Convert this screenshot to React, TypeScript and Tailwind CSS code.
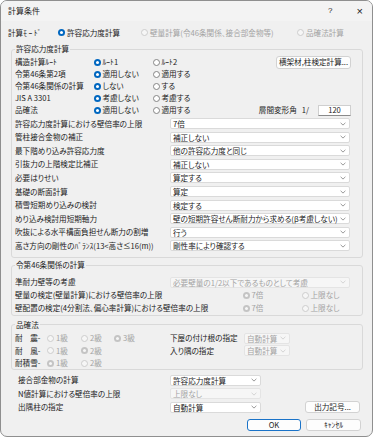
import React from 'react';

// Radio button dot in the Windows 11 style
function Radio({ checked = false, disabled = false }: { checked?: boolean; disabled?: boolean }) {
  if (checked && !disabled) {
    return (
      <span className="w-[7px] h-[7px] rounded-full bg-[#0067c0] flex items-center justify-center shrink-0">
        <span className="w-[3px] h-[3px] rounded-full bg-white" />
      </span>
    );
  }
  if (checked) {
    return (
      <span className="w-[7px] h-[7px] rounded-full bg-[#c4c4c4] flex items-center justify-center shrink-0">
        <span className="w-[3px] h-[3px] rounded-full bg-[#f6f6f6]" />
      </span>
    );
  }
  return (
    <span
      className={`w-[7px] h-[7px] rounded-full border shrink-0 ${
        disabled ? 'border-[#cdcdcd] bg-[#f6f6f6]' : 'border-[#858585] bg-white'
      }`}
    />
  );
}

// half-width katakana: keep their normal advance
const Hw = ({ children }: { children: React.ReactNode }) => (
  <span className="[font-feature-settings:normal]">{children}</span>
);

const RadioItem: React.FC<{
  label: React.ReactNode;
  checked?: boolean;
  disabled?: boolean;
  className?: string;
}> = ({ label, checked, disabled, className = '' }) => (
  <span className={`flex items-center gap-[1.5px] ${className}`}>
    <Radio checked={checked} disabled={disabled} />
    <span className={`leading-[10px] whitespace-nowrap ${disabled ? 'text-[#a3a3a3]' : ''}`}>{label}</span>
  </span>
);

const Chevron = ({ disabled }: { disabled?: boolean }) => (
  <svg width="6" height="4" viewBox="0 0 6 4" className="shrink-0">
    <path
      d="M0.6 0.8 L3 3.1 L5.4 0.8"
      fill="none"
      stroke={disabled ? '#cccccc' : '#808080'}
      strokeWidth="0.8"
    />
  </svg>
);

const Select: React.FC<{ value: string; disabled?: boolean; className?: string }> = ({
  value,
  disabled,
  className = 'w-[180px]',
}) => (
  <div
    className={`h-[11px] flex items-center pl-[2px] pr-[3px] rounded-[2px] border ${
      disabled ? 'bg-[#f6f6f6] border-[#e4e4e4] text-[#a3a3a3]' : 'bg-white border-[#dadada]'
    } ${className}`}
  >
    <span className="flex-1 whitespace-nowrap leading-[9px]">{value}</span>
    <Chevron disabled={disabled} />
  </div>
);

const Button: React.FC<{ label: React.ReactNode; className?: string; primary?: boolean }> = ({
  label,
  className = '',
  primary,
}) => (
  <div
    className={`h-[12px] flex items-center justify-center rounded-[3px] bg-[#fdfdfd] border leading-[10px] whitespace-nowrap ${
      primary ? 'border-[#1a73c8]' : 'border-[#d2d2d2]'
    } ${className}`}
  >
    {label}
  </div>
);

const DROPDOWN_ROWS: [React.ReactNode, string][] = [
  ['許容応力度計算における壁倍率の上限', '7倍'],
  ['管柱接合金物の補正', '補正しない'],
  ['最下階めり込み許容応力度', '他の許容応力度と同じ'],
  ['引抜力の上階検定比補正', '補正しない'],
  ['必要はりせい', '算定する'],
  ['基礎の断面計算', '算定'],
  ['積雪短期めり込みの検討', '検定する'],
  ['めり込み検討用短期軸力', '壁の短期許容せん断耐力から求める(β考慮しない)'],
  ['吹抜による水平構面負担せん断力の割増', '行う'],
  [
    <>
      高さ方向の剛性の<Hw>ﾊﾞﾗﾝｽ</Hw>(13&lt;高さ≤16(m))
    </>,
    '剛性率により確認する',
  ],
];

const RADIO_ROWS: [React.ReactNode, React.ReactNode, string][] = [
  [<Hw>構造計算ﾙｰﾄ</Hw>, <Hw>ﾙｰﾄ1</Hw>, 'ﾙｰﾄ2'],
  ['令第46条第2項', '適用しない', '適用する'],
  ['令第46条関係の計算', 'しない', 'する'],
  ['JIS A 3301', '考慮しない', '考慮する'],
  ['品確法', '適用しない', '適用する'],
];

export default function App() {
  return (
    <div className="w-[375px] h-[437px] bg-white font-['Noto_Sans_CJK_JP',sans-serif] [font-feature-settings:'palt'] text-[7.6px] leading-none text-[#1c1c1c]">
      <div className="w-[373px] h-[437px] border border-[#8f8f8f] rounded-[7px] bg-[#f0f0f0] overflow-hidden flex flex-col">
        {/* Title bar */}
        <div className="h-[20px] flex items-center pl-[7px] pr-[9px] bg-[#f3f3f3]">
          <span className="text-[8px] leading-[10px]">計算条件</span>
          <span className="ml-auto mr-[24px] text-[8px] font-['Liberation_Sans',sans-serif]">?</span>
          <span className="text-[11px] font-['Liberation_Sans',sans-serif] font-light">×</span>
        </div>

        <div className="flex flex-col pl-[10px]">
          {/* Mode */}
          <div className="h-[23px] flex items-center -ml-[3px]">
            <span className="w-[50px] leading-[10px]">
              計算<span className="[font-feature-settings:normal] tracking-[1.5px]">ﾓｰﾄﾞ</span>
            </span>
            <RadioItem label="許容応力度計算" checked className="w-[83px] gap-[2px]" />
            <RadioItem label="壁量計算(令46条関係、接合部金物等)" disabled className="w-[156px] gap-[2px]" />
            <RadioItem label="品確法計算" disabled className="gap-[2px]" />
          </div>

          {/* 許容応力度計算 */}
          <fieldset className="w-[352px] border border-[#d9d9d9] rounded-[3px]">
            <legend className="ml-[3px] px-[1px] leading-[10px]">許容応力度計算</legend>
            <div className="flex flex-col pl-[3px] pr-[11px] pt-[2px] pb-[5px]">
              {RADIO_ROWS.map(([label, a, b], i) => (
                <div key={i} className="h-[12px] flex items-center">
                  <span className="w-[79px] leading-[10px]">{label}</span>
                  <RadioItem label={a} checked className="w-[59px]" />
                  <RadioItem label={i === 0 ? <Hw>{b}</Hw> : b} />
                  {i === 0 && <Button label="横架材,柱検定計算..." className="ml-auto w-[75px] h-[13px]" />}
                  {i === 4 && (
                    <div className="ml-auto flex items-center leading-[10px]">
                      <span className="mr-[5px]">層間変形角</span>
                      <span className="mr-[9px]">1/</span>
                      <div className="w-[33px] h-[11px] bg-white border border-[#cfcfcf] border-b-[#8a8a8a] flex items-center justify-center">
                        120
                      </div>
                    </div>
                  )}
                </div>
              ))}
              <div className="mt-[1px] flex flex-col">
                {DROPDOWN_ROWS.map(([label, value], i) => (
                  <div key={i} className="h-[13.55px] flex items-center">
                    <span className="w-[155px] whitespace-nowrap leading-[10px]">{label}</span>
                    <Select value={value} />
                  </div>
                ))}
              </div>
            </div>
          </fieldset>

          {/* 令第46条関係の計算 */}
          <fieldset className="mt-[2px] w-[352px] border border-[#d9d9d9] rounded-[3px]">
            <legend className="ml-[3px] px-[1px] leading-[10px]">令第46条関係の計算</legend>
            <div className="flex flex-col pl-[3px] pr-[11px] pt-[5.5px] leading-[10px]">
              <div className="h-[13px] flex items-center">
                <span className="w-[155px]">準耐力壁等の考慮</span>
                <Select value="必要壁量の1/2以下であるものとして考慮" disabled />
              </div>
              <div className="h-[13px] flex items-center">
                <span className="w-[228px]">壁量の検定(壁量計算)における壁倍率の上限</span>
                <RadioItem label="7倍" checked disabled className="w-[59px]" />
                <RadioItem label="上限なし" disabled />
              </div>
              <div className="h-[13px] flex items-center">
                <span className="w-[228px]">壁配置の検定(4分割法、偏心率計算)における壁倍率の上限</span>
                <RadioItem label="7倍" checked disabled className="w-[59px]" />
                <RadioItem label="上限なし" disabled />
              </div>
            </div>
          </fieldset>

          {/* 品確法 */}
          <fieldset className="mt-[4px] w-[352px] border border-[#d9d9d9] rounded-[3px]">
            <legend className="ml-[3px] px-[1px] leading-[10px]">品確法</legend>
            <div className="flex flex-col pl-[3px] pt-[2px] leading-[10px]">
              <div className="h-[12.5px] flex items-center">
                <span className="w-[32px]">耐　震-</span>
                <RadioItem label="1級" disabled className="w-[34px] gap-[2px]" />
                <RadioItem label="2級" disabled className="w-[33px] gap-[2px]" />
                <RadioItem label="3級" checked disabled className="w-[56px] gap-[2px]" />
                <span className="w-[74px]">下屋の付け根の指定</span>
                <Select value="自動計算" disabled className="w-[46px]" />
              </div>
              <div className="h-[12.5px] flex items-center">
                <span className="w-[32px]">耐　風-</span>
                <RadioItem label="1級" disabled className="w-[34px] gap-[2px]" />
                <RadioItem label="2級" checked disabled className="w-[89px] gap-[2px]" />
                <span className="w-[74px]">入り隅の指定</span>
                <Select value="自動計算" disabled className="w-[46px]" />
              </div>
              <div className="h-[12.5px] flex items-center">
                <span className="w-[32px]">耐積雪-</span>
                <RadioItem label="1級" checked disabled className="w-[34px] gap-[2px]" />
                <RadioItem label="2級" disabled className="gap-[2px]" />
              </div>
            </div>
          </fieldset>

          {/* bottom rows */}
          <div className="mt-[3px] flex flex-col pl-[7px] leading-[10px]">
            <div className="h-[13.5px] flex items-center">
              <span className="w-[152px]">接合部金物の計算</span>
              <Select value="許容応力度計算" className="w-[91px]" />
            </div>
            <div className="h-[13.5px] flex items-center">
              <span className="w-[152px]">N値計算における壁倍率の上限</span>
              <Select value="上限なし" disabled className="w-[91px]" />
            </div>
            <div className="h-[13.5px] flex items-center">
              <span className="w-[152px]">出隅柱の指定</span>
              <Select value="自動計算" className="w-[91px]" />
              <Button label="出力記号..." className="ml-[44px] w-[55px]" />
            </div>
          </div>

          <div className="mt-[5px] w-[352px] flex justify-end gap-[5px] pr-[2px]">
            <Button label="OK" primary className="w-[54px]" />
            <Button label={<Hw>ｷｬﾝｾﾙ</Hw>} className="w-[55px]" />
          </div>
        </div>
      </div>
    </div>
  );
}
